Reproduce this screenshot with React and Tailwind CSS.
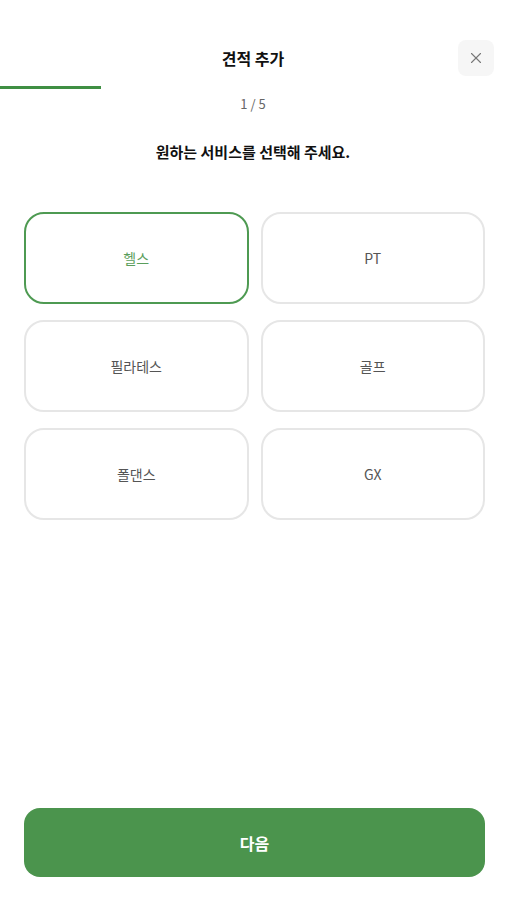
import { X } from 'lucide-react'

const services = ['헬스', 'PT', '필라테스', '골프', '폴댄스', 'GX']

export default function App() {
  const selected = '헬스'
  return (
    <div
      className="flex h-[900px] w-full flex-col bg-white"
      style={{ fontFamily: '"Noto Sans CJK KR", "Noto Sans", sans-serif' }}
    >
      {/* Header */}
      <div className="relative mt-[40px] flex h-[36px] items-center justify-center">
        <h1 className="text-[16px] font-bold text-[#111]">견적 추가</h1>
        <button className="absolute right-3 top-0 flex h-[36px] w-[36px] items-center justify-center rounded-lg bg-[#f6f6f6]">
          <X size={18} strokeWidth={1.5} className="text-[#777]" />
        </button>
      </div>

      {/* Progress */}
      <div className="mt-[10px] h-[3px] w-[101px] bg-[#3f8f43]" />
      <p className="mt-[6px] text-center text-[13px] leading-[18px] text-[#666]">1 / 5</p>

      <p className="mt-[29px] text-center text-[15px] font-bold leading-[20px] text-[#111]">
        원하는 서비스를 선택해 주세요.
      </p>

      {/* Options */}
      <div className="mt-[50px] grid grid-cols-2 gap-x-3 gap-y-4 pl-6 pr-[21px]">
        {services.map(s => (
          <button
            key={s}
            className={`flex h-[92px] items-center justify-center rounded-[20px] border-2 text-[14px] ${
              s === selected ? 'border-[#4e9a52] text-[#5a9e5c]' : 'border-[#e6e6e6] text-[#555]'
            }`}
          >
            {s}
          </button>
        ))}
      </div>

      {/* Next */}
      <div className="mt-auto mb-[23px] pl-6 pr-[21px]">
        <button className="flex h-[69px] w-full items-center justify-center rounded-[16px] bg-[#4b944d] text-[16px] font-bold text-white">
          다음
        </button>
      </div>
    </div>
  )
}
